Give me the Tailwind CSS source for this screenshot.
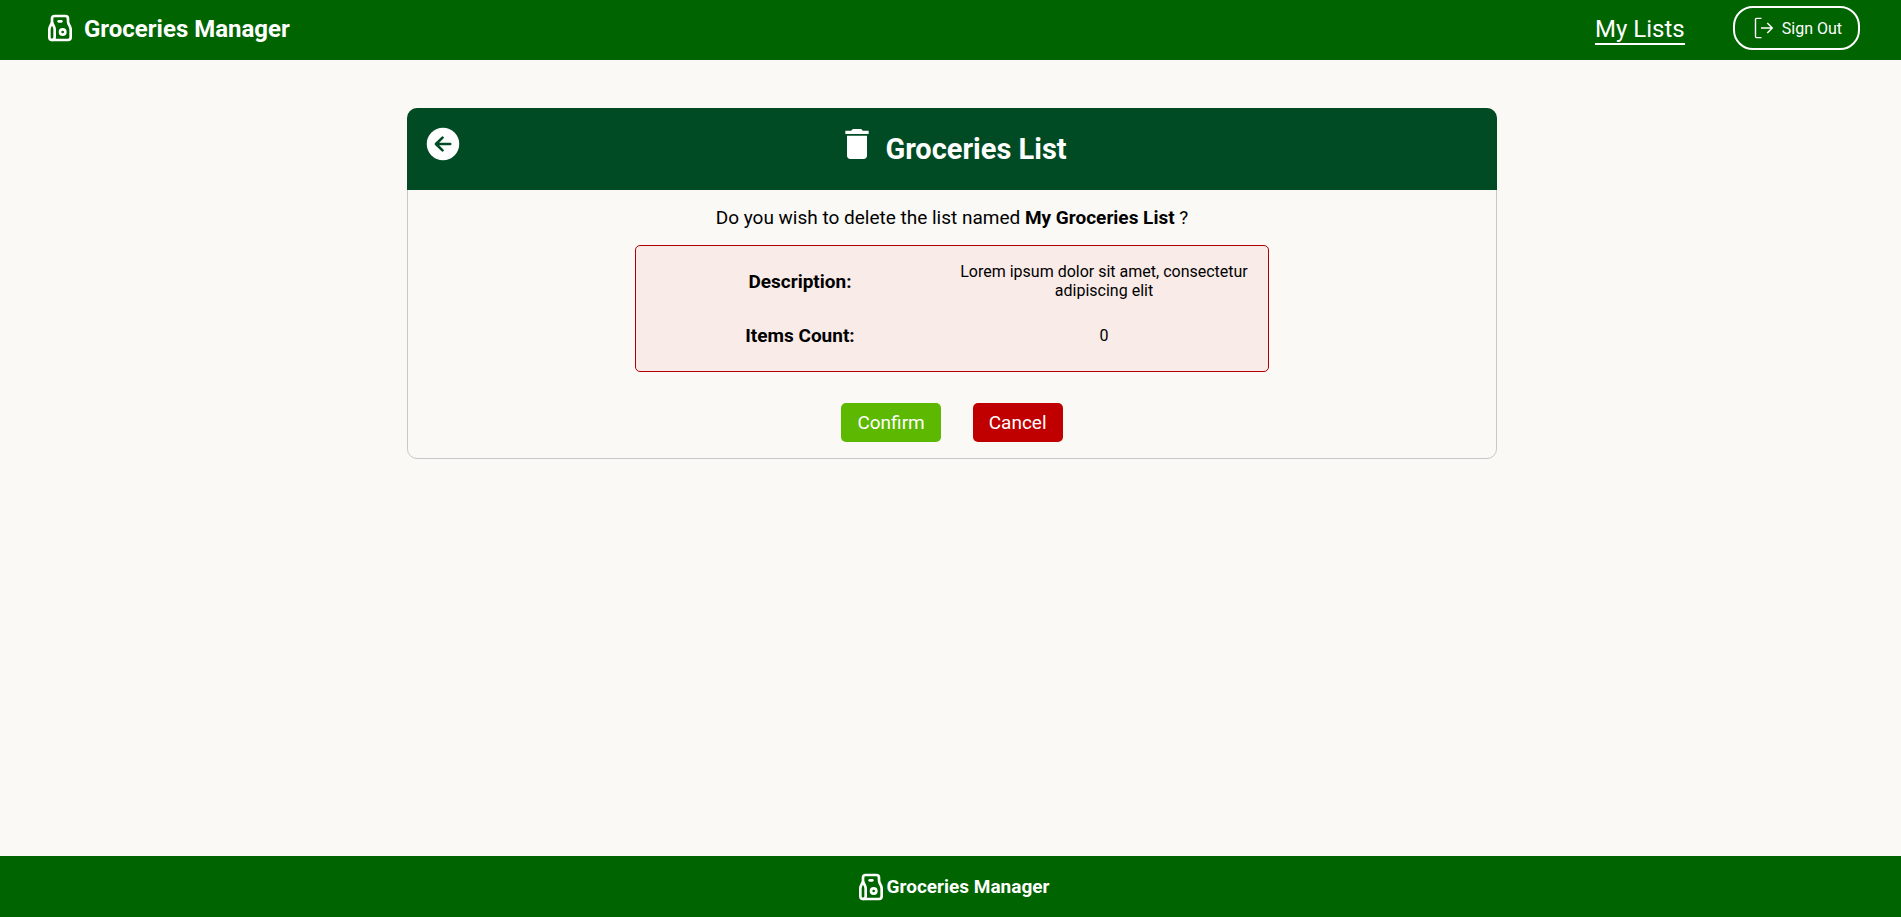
<!DOCTYPE html>
<html lang="en">
<head>
<meta charset="utf-8">
<meta name="viewport" content="width=device-width, initial-scale=1">
<title>Groceries Manager</title>
<script src="https://cdn.jsdelivr.net/npm/@tailwindcss/browser@4"></script>
</head>
<body class="flex min-h-screen flex-col bg-[#fbf9f6] font-['Roboto',sans-serif] text-black">
  <svg class="hidden" aria-hidden="true">
    <symbol id="bag" viewBox="0 0 24 24" fill="none" stroke="currentColor" stroke-width="2" stroke-linecap="round" stroke-linejoin="round">
      <path d="M8 3h8a2 2 0 0 1 2 2v1.82a5 5 0 0 0 .528 2.236l.944 1.888a5 5 0 0 1 .528 2.236v5.82a2 2 0 0 1 -2 2h-12a2 2 0 0 1 -2 -2v-5.82a5 5 0 0 1 .528 -2.236l1.472 -2.944v-3a2 2 0 0 1 2 -2z"/>
      <circle cx="14" cy="15" r="2"/>
      <path d="M6 21a2 2 0 0 0 2 -2v-5.82a5 5 0 0 0 -.528 -2.236l-1.472 -2.944"/>
      <path d="M11 7h2"/>
    </symbol>
  </svg>

  <header class="flex h-15 items-center justify-between bg-[#006400] pr-[41px] pb-1 pl-11 text-white">
    <a href="#" class="flex items-center gap-2 text-2xl font-bold">
      <svg class="size-8" aria-hidden="true"><use href="#bag"/></svg>
      <span class="pt-0.5">Groceries Manager</span>
    </a>
    <nav class="flex items-center gap-12">
      <a href="#" class="mt-1 border-b-2 border-white text-2xl leading-7">My Lists</a>
      <button type="button" class="flex h-11 items-center gap-[7px] rounded-[20px] border-2 border-white px-4 text-base">
        <svg class="size-6" viewBox="0 0 24 24" fill="none" stroke="currentColor" stroke-width="1.400" aria-hidden="true">
          <path d="M10.500 2.400H5.500q-1 0-1 1v17.200q0 1 1 1h5"/>
          <path d="M10 12h11M16.300 6.900l5 5.100-5 5.100"/>
        </svg>
        <span class="pt-0.5">Sign Out</span>
      </button>
    </nav>
  </header>

  <main class="flex grow flex-col items-center pt-12 pr-4 pl-[19px]">
    <section class="w-full max-w-[1090px] rounded-[10px] border border-[#c8c8c8]">
      <div class="-mx-px -mt-px grid grid-cols-[40px_1fr_40px] rounded-t-[10px] bg-[#004b23] p-4 text-white">
        <button type="button" aria-label="Back" class="size-10">
          <svg class="size-10" viewBox="0 0 512 512" aria-hidden="true">
            <circle cx="256" cy="256" r="208" fill="currentColor"/>
            <path d="M250 174l-84 82 84 82M170 256h178" fill="none" stroke="#004b23" stroke-width="34" stroke-linecap="round" stroke-linejoin="round"/>
          </svg>
        </button>
        <h1 class="flex h-[50px] items-start justify-center gap-2 text-[29px] leading-[50px] font-bold">
          <svg class="size-10" viewBox="0 0 24 24" fill="currentColor" aria-hidden="true">
            <path d="M6 19c0 1.100.9 2 2 2h8c1.100 0 2-.9 2-2V7H6v12zM19 4h-3.500l-1-1h-5l-1 1H5v2h14V4z"/>
          </svg>
          Groceries List
        </h1>
      </div>
      <div class="flex flex-col items-center p-4">
        <p class="text-[19px] leading-[23px]">Do you wish to delete the list named <strong class="font-bold">My Groceries List</strong> ?</p>
        <dl class="mt-4 grid w-full max-w-[634px] grid-cols-2 items-center gap-x-2 gap-y-6 rounded-[5px] border border-[#b00000] bg-[#f9ebe8] px-4 pt-4 pb-6 text-center">
          <dt class="text-[19px] leading-[23px] font-bold">Description:</dt>
          <dd class="text-base leading-[19px]">Lorem ipsum dolor sit amet, consectetur adipiscing elit</dd>
          <dt class="text-[19px] leading-[23px] font-bold">Items Count:</dt>
          <dd class="text-base leading-[19px]">0</dd>
        </dl>
        <div class="mt-[31px] flex gap-8 text-[19px] leading-[23px] text-white">
          <button type="button" class="rounded-[5px] bg-[#5cb800] px-4 py-2">Confirm</button>
          <button type="button" class="rounded-[5px] bg-[#c00000] px-4 py-2">Cancel</button>
        </div>
      </div>
    </section>
  </main>

  <footer class="flex h-[61px] items-center justify-center bg-[#006400] pl-[3px] text-[19px] font-bold text-white">
    <svg class="size-8" aria-hidden="true"><use href="#bag"/></svg>
    <span class="pt-0.5">Groceries Manager</span>
  </footer>
</body>
</html>
